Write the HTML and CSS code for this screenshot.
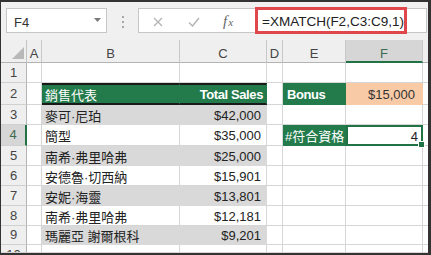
FILE: index.html
```html
<!DOCTYPE html>
<html>
<head>
<meta charset="utf-8">
<link rel="stylesheet" href="styles.css">
</head>
<body>
<div class="frame">
  <div class="toolbar">
    <div class="namebox">
      <span>F4</span>
      <svg class="dd" width="7" height="4" viewBox="0 0 7 4"><path d="M0 0H7L3.5 4Z" fill="#7a7a7a"/></svg>
    </div>
    <div class="grip"><i></i><i></i><i></i></div>
    <div class="fbar">
      <svg class="ico cancel" width="10" height="10" viewBox="0 0 10 10"><path d="M1 1L9 9M9 1L1 9" stroke="#b3b3b3" stroke-width="1.3" fill="none"/></svg>
      <svg class="ico enter" width="12" height="10" viewBox="0 0 12 10"><path d="M1 5.5L4.5 9L11 1" stroke="#b3b3b3" stroke-width="1.4" fill="none"/></svg>
      <span class="fx"><span class="fx-f">f</span><span class="fx-x">x</span></span>
      <div class="formula">=XMATCH(F2,C3:C9,1)</div>
    </div>
  </div>
  <div class="sheet">
    <div class="corner"><svg width="12" height="12" viewBox="0 0 12 12"><path d="M12 0V12H0Z" fill="#b9b9b9"/></svg></div>
    <div class="ch">A</div><div class="ch">B</div><div class="ch">C</div><div class="ch">D</div><div class="ch">E</div><div class="ch hl">F</div><div class="ch"></div>

    <div class="rh">1</div><div class="c"></div><div class="c"></div><div class="c"></div><div class="c"></div><div class="c"></div><div class="c"></div><div class="c"></div>

    <div class="rh">2</div><div class="c"></div>
    <div class="c g thead">銷售代表</div><div class="c g thead b r">Total Sales</div>
    <div class="c"></div><div class="c g b">Bonus</div><div class="c pe r">$15,000</div><div class="c"></div>

    <div class="rh">3</div><div class="c"></div><div class="c band">麥可·尼珀</div><div class="c band r">$42,000</div><div class="c"></div><div class="c"></div><div class="c"></div><div class="c"></div>

    <div class="rh hl">4</div><div class="c"></div><div class="c">簡型</div><div class="c r">$35,000</div><div class="c"></div><div class="c g tight">#符合資格</div><div class="c sel r">4<span class="handle"></span></div><div class="c"></div>

    <div class="rh">5</div><div class="c"></div><div class="c band">南希·弗里哈弗</div><div class="c band r">$25,000</div><div class="c"></div><div class="c"></div><div class="c"></div><div class="c"></div>

    <div class="rh">6</div><div class="c"></div><div class="c">安德魯·切西納</div><div class="c r">$15,901</div><div class="c"></div><div class="c"></div><div class="c"></div><div class="c"></div>

    <div class="rh">7</div><div class="c"></div><div class="c band">安妮·海靈</div><div class="c band r">$13,801</div><div class="c"></div><div class="c"></div><div class="c"></div><div class="c"></div>

    <div class="rh">8</div><div class="c"></div><div class="c">南希·弗里哈弗</div><div class="c r">$12,181</div><div class="c"></div><div class="c"></div><div class="c"></div><div class="c"></div>

    <div class="rh">9</div><div class="c"></div><div class="c band">瑪麗亞 謝爾根科</div><div class="c band r">$9,201</div><div class="c"></div><div class="c"></div><div class="c"></div><div class="c"></div>

    <div class="rh last">10</div><div class="c"></div><div class="c"></div><div class="c"></div><div class="c"></div><div class="c"></div><div class="c"></div><div class="c"></div>
  </div>
</div>
</body>
</html>
```
FILE: styles.css
```css
* { box-sizing: border-box; margin: 0; padding: 0; }
body {
  margin: 0;
  background: #fff;
  font-family: "Liberation Sans", "Noto Sans CJK TC", sans-serif;
  font-size: 13px;
  color: #222;
}
.frame {
  width: 431px;
  height: 255px;
  border-style: solid;
  border-color: #333;
  border-width: 2px 3px 2px 1px;
  display: flex;
  flex-direction: column;
  overflow: hidden;
  background: #fff;
}
.toolbar {
  height: 38px;
  flex: none;
  background: #f0f0f0;
  display: flex;
  align-items: flex-start;
  padding: 6px 1px 0 5px;
}
.namebox {
  width: 101px;
  height: 25px;
  background: #fff;
  border: 1px solid #c6c6c6;
  display: flex;
  align-items: center;
  justify-content: space-between;
  padding: 3px 5px 0 7px;
  color: #333;
}
.dd { margin-top: -5px; }
.grip {
  width: 31px;
  height: 25px;
  display: flex;
  flex-direction: column;
  align-items: center;
  justify-content: center;
  gap: 3px;
  padding-top: 3px;
}
.grip i { display: block; width: 2px; height: 2px; background: #a8a8a8; }
.fbar {
  flex: 1;
  height: 25px;
  background: #fff;
  border: 1px solid #c6c6c6;
  display: flex;
  align-items: center;
  padding-left: 14px;
}
.ico { margin-top: 3px; flex: none; }
.enter { margin-left: 25px; }
.fx {
  margin-left: 23px;
  margin-top: 2px;
  font-family: "Liberation Serif", serif;
  font-style: italic;
  color: #666;
  width: 12px;
  display: flex;
  align-items: baseline;
}
.fx-f { font-size: 15px; }
.fx-x { font-size: 11px; margin-left: 1px; }
.formula {
  margin-left: 20px;
  width: 152px;
  height: 27px;
  flex: none;
  border: 3px solid #e0474c;
  background: #fff;
  display: flex;
  align-items: center;
  padding: 1px 0 0 4px;
  font-size: 13.5px;
  color: #222;
  white-space: nowrap;
}
.sheet {
  flex: 1;
  display: grid;
  grid-template-columns: 26px 15px 138px 87px 16px 63px 77px 1fr;
  grid-template-rows: 23px 20px 22px 20px 21px 20px 20px 20px 20px 19px 1fr;
  min-height: 0;
}
.corner {
  background: #efefef;
  border-right: 1px solid #c4c4c4;
  border-bottom: 1px solid #b4b4b4;
  display: flex;
  align-items: flex-end;
  justify-content: flex-end;
  padding: 0 2px 3px 0;
}
.ch {
  background: #efefef;
  border-right: 1px solid #c8c8c8;
  border-bottom: 1px solid #b4b4b4;
  color: #444;
  display: flex;
  justify-content: center;
  align-items: center;
  padding-top: 5px;
  overflow: hidden;
}
.ch.hl {
  background: #d6d6d6;
  border-bottom: 2px solid #217346;
  color: #3d6b4f;
  padding-top: 6px;
}
.rh {
  background: #efefef;
  border-right: 1px solid #b4b4b4;
  border-bottom: 1px solid #d0d0d0;
  color: #444;
  display: flex;
  justify-content: center;
  align-items: center;
  line-height: 20px;
  overflow: hidden;
}
.rh.hl {
  background: #d6d6d6;
  border-right: 2px solid #217346;
  color: #3d6b4f;
}
.rh.last { align-items: flex-start; }
.c {
  border-right: 1px solid #d6d6d6;
  border-bottom: 1px solid #d6d6d6;
  display: flex;
  align-items: center;
  padding: 1px 4px 0 3px;
  white-space: nowrap;
  overflow: hidden;
}
.r { justify-content: flex-end; padding-right: 5px; }
.b { font-weight: bold; letter-spacing: -0.4px; }
.g {
  background: #237a4b;
  border-color: #237a4b;
  color: #fff;
}
.g.b { padding-left: 4px; }
.thead {
  border-top: 2px solid #1a1a1a;
  border-bottom: 2px solid #1a1a1a;
}
.thead.r { padding-right: 3px; }
.tight { padding-left: 2px; }
.band {
  background: #d9d9d9;
  border-color: #d9d9d9;
}
.pe {
  background: #f8caa6;
  border-color: #f8caa6;
  color: #333;
  padding-right: 7px;
}
.sel {
  border: 2px solid #217346;
  position: relative;
  overflow: visible;
  padding-right: 3px;
  z-index: 1;
}
.handle {
  position: absolute;
  right: -3px;
  bottom: -3px;
  width: 5px;
  height: 5px;
  background: #217346;
  box-shadow: 0 0 0 1px #fff;
}
```
